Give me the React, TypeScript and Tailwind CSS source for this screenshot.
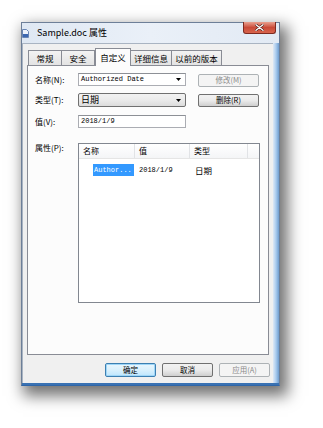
import React from 'react';

const cjk = "font-['Noto_Sans_CJK_SC','Noto_Sans',sans-serif]";
const mono = "font-['Liberation_Mono',monospace]";

const Arrow = () => (
  <svg width="5" height="3" viewBox="0 0 5 3" className="mr-[4px]">
    <path d="M0 0h5L2.5 3z" fill="#000" />
  </svg>
);

const DocIcon = () => (
  <svg width="7" height="9" viewBox="0 0 7 9">
    <path d="M0.5 0.5h4l2 2v6h-6z" fill="#eef3fb" stroke="#6a86b4" strokeWidth="1" />
    <rect x="1" y="5" width="5" height="3" fill="#3d68b0" />
  </svg>
);

const CloseButton = () => (
  <div className="-mt-px mr-[3px] flex h-[12px] w-[33px] items-center justify-center rounded-b-[3px] border border-t-0 border-[#7d2a20] bg-gradient-to-b from-[#e8a090] via-[#c94a38] to-[#d8644c]">
    <svg width="9" height="7" viewBox="0 0 9 7">
      <path d="M1 0.8l7 5.4M8 0.8l-7 5.4" stroke="#4a1a14" strokeWidth="2.6" strokeLinecap="round" />
      <path d="M1 0.8l7 5.4M8 0.8l-7 5.4" stroke="#fff" strokeWidth="1.4" strokeLinecap="round" />
    </svg>
  </div>
);

interface TabProps {
  label: string;
  width: string;
  selected?: boolean;
}

const Tab = ({ label, width, selected }: TabProps) =>
  selected ? (
    <div className={`${width} relative z-10 -mb-px flex h-[18px] items-center justify-center border border-b-0 border-[#898c95] bg-[#fcfcfc] text-[8.5px] text-black`}>
      {label}
    </div>
  ) : (
    <div className={`${width} -ml-px flex h-[15px] items-center justify-center border border-b-0 border-[#898c95] bg-gradient-to-b from-[#f3f3f3] to-[#e3e3e3] text-[8.5px] text-black first:ml-0`}>
      {label}
    </div>
  );

interface ButtonProps {
  label: string;
  disabled?: boolean;
  isDefault?: boolean;
  className?: string;
}

const Button = ({ label, disabled, isDefault, className = '' }: ButtonProps) => {
  if (disabled) {
    return (
      <div className={`${className} flex items-center justify-center rounded-[2px] border border-[#adb2b5] bg-[#f4f4f4] text-[7.5px] text-[#8a8a8a]`}>
        {label}
      </div>
    );
  }
  if (isDefault) {
    return (
      <div className={`${className} flex items-center justify-center rounded-[2px] border border-[#3c7fb1] bg-gradient-to-b from-[#eaf6fd] via-[#d9f0fc] to-[#bee6fd] text-[7.5px] text-black shadow-[inset_0_0_0_1px_#9fd6f7]`}>
        {label}
      </div>
    );
  }
  return (
    <div className={`${className} flex items-center justify-center rounded-[2px] border border-[#707070] bg-gradient-to-b from-[#f2f2f2] via-[#ebebeb] to-[#cfcfcf] text-[7.5px] text-black`}>
      {label}
    </div>
  );
};

export default function App() {
  return (
    <div className={`${cjk} min-h-[428px] w-[323px] bg-white pl-[21px] pt-[22px]`}>
      <div className="flex h-[364px] w-[259px] flex-col border border-[#6d7f98] border-b-[#2f66a8] bg-[#e6edf6] shadow-[5px_7px_14px_3px_rgba(0,0,0,0.55)]">
        {/* title bar */}
        <div className="flex h-[20px] items-start bg-gradient-to-r from-[#dfe8f3] via-[#eaf0f8] to-[#e2eaf4]">
          <div className="flex h-[20px] flex-1 items-center">
            <DocIcon />
            <span className="ml-[8px] text-[9px] text-black">Sample.doc 属性</span>
          </div>
          <CloseButton />
        </div>

        {/* body */}
        <div className="flex flex-1 flex-col">
          <div className="flex flex-1">
            <div className="flex w-[251px] flex-col border-l border-t border-[#a9b4c2] bg-[#f0f0f0] pl-[4px]">
              {/* tabs */}
              <div className="flex h-[21px] items-end pl-[1px]">
                <Tab label="常规" width="w-[34px]" />
                <Tab label="安全" width="w-[34px]" />
                <Tab label="自定义" width="w-[36px]" selected />
                <Tab label="详细信息" width="w-[42px]" />
                <Tab label="以前的版本" width="w-[51px]" />
              </div>

              {/* panel */}
              <div className="h-[290px] w-[242px] border border-[#898c95] bg-[#fcfcfc] pl-[7px] pt-[7px] text-[8px] text-black">
                <div className="flex h-[13px] items-center">
                  <span className="w-[43px]">名称(N):</span>
                  <div className={`${mono} flex h-[13px] w-[108px] items-center justify-between border border-[#abadb3] border-t-[#8d9096] bg-white pl-[2px] text-[7px]`}>
                    <span>Authorized Date</span>
                    <Arrow />
                  </div>
                  <Button label="修改(M)" disabled className="ml-[12px] mt-[1px] h-[13px] w-[61px]" />
                </div>

                <div className="mt-[7px] flex h-[14px] items-center">
                  <span className="w-[43px]">类型(T):</span>
                  <div className="flex h-[14px] w-[108px] items-center justify-between rounded-[2px] border border-[#707070] bg-gradient-to-b from-[#f2f2f2] via-[#ebebeb] to-[#dcdcdc] pl-[2px] text-[9px]">
                    <span>日期</span>
                    <Arrow />
                  </div>
                  <Button label="删除(R)" className="ml-[12px] h-[13px] w-[61px]" />
                </div>

                <div className="mt-[8px] flex h-[13px] items-center">
                  <span className="w-[43px]">值(V):</span>
                  <div className={`${mono} flex h-[13px] w-[108px] items-center border border-[#abadb3] border-t-[#8d9096] bg-white pl-[2px] text-[7px]`}>
                    2018/1/9
                  </div>
                </div>

                <div className="mt-[15px] flex">
                  <span className="mt-[-1px] w-[43px]">属性(P):</span>
                  <div className="h-[160px] w-[182px] border border-[#828790] bg-white">
                    <div className="flex h-[15px] border-b border-[#e5e5e5] bg-gradient-to-b from-white to-[#f4f5f7] text-[8px]">
                      <div className="flex w-[56px] items-center border-r border-[#e1e3e6] pl-[4px]">名称</div>
                      <div className="flex w-[55px] items-center border-r border-[#e1e3e6] pl-[4px]">值</div>
                      <div className="flex w-[58px] items-center border-r border-[#e1e3e6] pl-[4px]">类型</div>
                      <div className="flex-1" />
                    </div>
                    <div className="mt-[5px] flex h-[12px] items-center">
                      <div className="flex w-[56px] pl-[14px]">
                        <span className={`${mono} flex h-[12px] w-[41px] items-center bg-[#3399ff] pl-[1px] text-[7px] text-white`}>Author...</span>
                      </div>
                      <div className={`${mono} w-[55px] pl-[4px] text-[7px]`}>2018/1/9</div>
                      <div className="w-[58px] pl-[5px] text-[8.5px]">日期</div>
                    </div>
                  </div>
                </div>
              </div>

              {/* dialog buttons */}
              <div className="mt-[8px] flex justify-end gap-[6px] pr-[3px]">
                <Button label="确定" isDefault className="h-[14px] w-[51px]" />
                <Button label="取消" className="h-[14px] w-[51px]" />
                <Button label="应用(A)" disabled className="h-[14px] w-[51px]" />
              </div>
            </div>
            {/* right frame */}
            <div className="w-[6px] bg-gradient-to-r from-[#dfe9f5] via-[#a9cbee] to-[#6f9ccd]" />
          </div>
          <div className="h-[2px] bg-[#3a72b3]" />
        </div>
      </div>
    </div>
  );
}
